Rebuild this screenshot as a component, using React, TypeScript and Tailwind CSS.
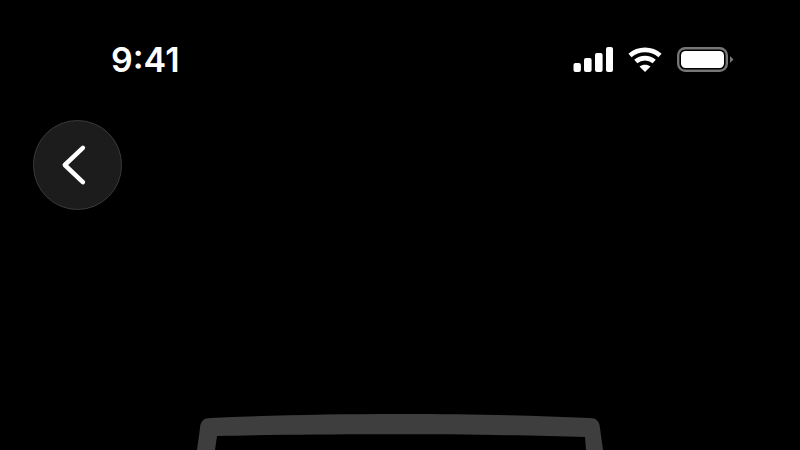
import React from 'react';

const SignalIcon = () => (
  <svg width="40" height="26" viewBox="0 0 40 26" fill="#fff">
    <rect x="0.5" y="16" width="7.4" height="9" rx="2" />
    <rect x="11" y="11" width="7.6" height="14" rx="2" />
    <rect x="22" y="6" width="7.6" height="19" rx="2" />
    <rect x="33" y="0" width="7" height="25" rx="2" />
  </svg>
);

const WifiIcon = () => (
  <svg width="34" height="26" viewBox="0 0 34 26" fill="none">
    <path d="M2 8.5C10.5 1 23.5 1 32 8.5" stroke="#fff" strokeWidth="4.8" />
    <path d="M7.8 14.5C13 10 21 10 26.2 14.5" stroke="#fff" strokeWidth="4.8" />
    <path d="M11.5 19.5C15 17.2 19 17.2 22.5 19.5L17 25Z" fill="#fff" />
  </svg>
);

const BatteryIcon = () => (
  <svg width="57" height="26" viewBox="0 0 57 26" fill="none">
    <rect x="1.2" y="1.2" width="48.6" height="22.6" rx="7" stroke="#777" strokeWidth="2.4" />
    <rect x="4" y="4" width="43" height="17" rx="4.5" fill="#fff" />
    <path d="M53 9L56.5 12.5L53 16Z" fill="#777" />
  </svg>
);

const App: React.FC = () => {
  return (
    <div className="w-[800px] h-[450px] bg-black overflow-hidden flex flex-col font-['Inter',sans-serif]">
      {/* Status bar */}
      <div className="flex items-center justify-between pl-[111px] pr-[66px] pt-[42px]">
        <span className="text-[34px] leading-[36px] font-semibold text-white">9:41</span>
        <div className="flex items-center gap-[15px]">
          <SignalIcon />
          <WifiIcon />
          <BatteryIcon />
        </div>
      </div>

      {/* Back button */}
      <div className="pl-[33px] pt-[42px]">
        <button className="w-[89px] h-[90px] rounded-full bg-[#1c1c1c] border border-[#3a3a3a] flex items-center justify-center">
          <svg width="89" height="90" viewBox="0 0 89 90" fill="none">
            <path d="M50 27.5L31.5 45L50 62.5" stroke="#fff" strokeWidth="4.6" strokeLinecap="round" strokeLinejoin="round" />
          </svg>
        </button>
      </div>

      {/* Device frame, cut off by the bottom of the page */}
      <div className="mt-auto flex justify-center">
        <svg width="420" height="40" viewBox="0 0 420 40" fill="#3e3e3e">
          <path d="M7 40L10 18C10.5 11 14 8 20 8C80 5.5 140 4 210 4C280 4 340 5.5 400 8C406 8 409.5 11 410 18L413 40L396 40L395 27C300 23.5 120 23.5 27 26L25 40Z" />
        </svg>
      </div>
    </div>
  );
};

export default App;
